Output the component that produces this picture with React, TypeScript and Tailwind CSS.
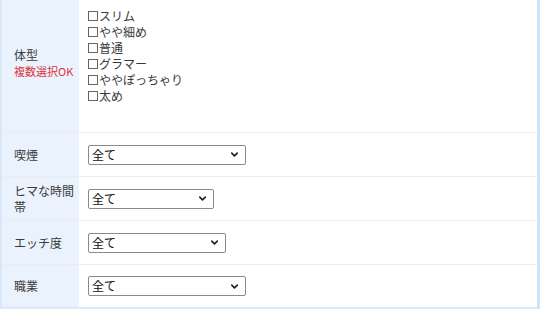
import { ChevronDown } from "lucide-react";

const bodyTypes = ["スリム", "やや細め", "普通", "グラマー", "ややぽっちゃり", "太め"];

const selects = [
  { label: "喫煙", width: "w-[158px]" },
  { label: "ヒマな時間帯", width: "w-[126px]" },
  { label: "エッチ度", width: "w-[138px]" },
  { label: "職業", width: "w-[158px]" },
];

function Select({ width }: { width: string }) {
  return (
    <div className={`${width} flex h-[20px] items-center justify-between rounded-[2px] border border-[#8a8a8a] bg-white pl-[3px] pr-[5px] text-[12px] text-[#111]`}>
      <span>全て</span>
      <ChevronDown size={11} strokeWidth={3.5} className="text-[#222]" />
    </div>
  );
}

export default function App() {
  return (
    <div className="h-[309px] w-[540px] overflow-hidden bg-white font-['Noto_Sans_CJK_JP',sans-serif] text-[12px] text-[#3a3a3a]">
      <div className="flex flex-col border-l-[2px] border-r-[3px] border-b-[2px] border-l-[#d9e8f8] border-r-[#cfe2f6] border-b-[#dbe9f8]">
        <div className="flex h-[133px] border-b border-[#ececec]">
          <div className="flex w-[77px] shrink-0 flex-col justify-center bg-[#eaf3fd] pb-[6px] pl-[12px]">
            <span className="leading-[16px]">体型</span>
            <span className="text-[11px] leading-[16px] text-[#e0323a]">複数選択OK</span>
          </div>
          <div className="flex flex-col pl-[9px] pt-[8px]">
            {bodyTypes.map((t) => (
              <div key={t} className="flex h-[16px] items-center leading-[16px]">
                <span className="mr-[1px] h-[10px] w-[10px] border border-[#666]" />
                <span>{t}</span>
              </div>
            ))}
          </div>
        </div>
        {selects.map((s, i) => (
          <div key={s.label} className={`flex ${i < selects.length - 1 ? "h-[44px] border-b border-[#ececec]" : "h-[42px]"}`}>
            <div className="flex w-[77px] shrink-0 items-center bg-[#eaf3fd] pl-[12px] pr-[4px] leading-[16px]">
              {s.label}
            </div>
            <div className="flex items-center pl-[9px]">
              <Select width={s.width} />
            </div>
          </div>
        ))}
      </div>
    </div>
  );
}
